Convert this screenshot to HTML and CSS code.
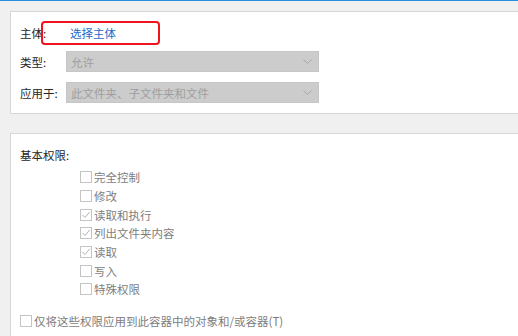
FILE: index.html
```html
<!DOCTYPE html>
<html lang="zh-CN">
<head>
  <meta charset="UTF-8">
  <meta name="viewport" content="width=device-width, initial-scale=1.0">
  <title>权限项目</title>
  <link rel="stylesheet" href="styles.css">
</head>
<body>
  <div class="window">

    <!-- 主体 / 类型 / 应用于 -->
    <section class="panel owner-panel">
      <div class="field-row owner-row">
        <span class="field-label">主体:</span>
        <a class="owner-link" href="#">选择主体</a>
        <span class="highlight"></span>
      </div>
      <div class="field-row">
        <span class="field-label">类型:</span>
        <div class="select">
          <span>允许</span>
          <svg class="chevron" width="9" height="5" viewBox="0 0 9 5"><path d="M0.5 0.5 L4.5 4.5 L8.5 0.5" fill="none" stroke="#a9a9a9" stroke-width="1"/></svg>
        </div>
      </div>
      <div class="field-row">
        <span class="field-label">应用于:</span>
        <div class="select">
          <span>此文件夹、子文件夹和文件</span>
          <svg class="chevron" width="9" height="5" viewBox="0 0 9 5"><path d="M0.5 0.5 L4.5 4.5 L8.5 0.5" fill="none" stroke="#a9a9a9" stroke-width="1"/></svg>
        </div>
      </div>
    </section>

    <!-- 基本权限 -->
    <section class="panel perm-panel">
      <div class="perm-title">基本权限:</div>
      <ul class="perm-list">
        <li><span class="box"></span>完全控制</li>
        <li><span class="box"></span>修改</li>
        <li><span class="box checked"><svg width="10" height="10" viewBox="0 0 10 10"><path d="M1.5 5 L4 7.5 L8.8 1.8" fill="none" stroke="#b4b4b4" stroke-width="1"/></svg></span>读取和执行</li>
        <li><span class="box checked"><svg width="10" height="10" viewBox="0 0 10 10"><path d="M1.5 5 L4 7.5 L8.8 1.8" fill="none" stroke="#b4b4b4" stroke-width="1"/></svg></span>列出文件夹内容</li>
        <li><span class="box checked"><svg width="10" height="10" viewBox="0 0 10 10"><path d="M1.5 5 L4 7.5 L8.8 1.8" fill="none" stroke="#b4b4b4" stroke-width="1"/></svg></span>读取</li>
        <li><span class="box"></span>写入</li>
        <li><span class="box"></span>特殊权限</li>
      </ul>
      <div class="apply-row"><span class="box"></span>仅将这些权限应用到此容器中的对象和/或容器(T)</div>
    </section>

  </div>
</body>
</html>
```

FILE: styles.css
```css
body {
  box-sizing: border-box;
  margin: 0;
  height: 336px;
  overflow: hidden;
  font-family: "Noto Sans CJK SC", "Noto Sans", sans-serif;
  font-size: 11.5px;
  color: #262626;
  background: #f0f0f0;
  border-top: 1px solid #2b8ce0;
}
.window {
  padding: 10px 0 0 10px;
}
.panel {
  background: #fff;
  border: 1px solid #d6d6d6;
  border-right: none;
}
.owner-panel {
  padding: 9px 0 10px 9px;
}
.field-row {
  position: relative;
  display: flex;
  align-items: center;
  height: 21px;
  margin-bottom: 10px;
}
.field-row:last-child {
  margin-bottom: 0;
}
.owner-row {
  height: 24px;
  margin-bottom: 6px;
}
.field-label {
  width: 46px;
  flex-shrink: 0;
}
.owner-link {
  padding-left: 4px;
  color: #1f68c8;
  text-decoration: none;
}
.highlight {
  position: absolute;
  left: 21px;
  top: 0;
  width: 119px;
  height: 24px;
  box-sizing: border-box;
  border: 2px solid #f0141c;
  border-radius: 4px;
}
.select {
  display: flex;
  align-items: center;
  justify-content: space-between;
  box-sizing: border-box;
  width: 253px;
  height: 21px;
  padding: 0 6px 0 4px;
  background: #cccccc;
  border: 1px solid #c6c6c6;
  color: #9e9e9e;
}
.perm-panel {
  margin-top: 19px;
  height: 190px;
  padding: 12px 0 0 9px;
  border-bottom: none;
}
.perm-title {
  line-height: 18px;
}
.perm-list {
  list-style: none;
  margin: 4px 0 0;
  padding: 0 0 0 60px;
}
.perm-list li,
.apply-row {
  display: flex;
  align-items: center;
  height: 18.7px;
  color: #7d7d7d;
}
.apply-row {
  margin-top: 13px;
}
.box {
  display: flex;
  align-items: center;
  justify-content: center;
  box-sizing: border-box;
  width: 12px;
  height: 12px;
  margin-right: 2px;
  border: 1px solid #c4c4c4;
  background: #fff;
}
```
